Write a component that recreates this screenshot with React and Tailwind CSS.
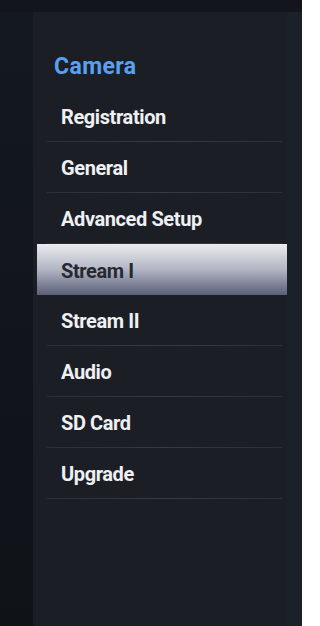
import React from "react";

const items = ["Registration", "General", "Advanced Setup", "Stream I", "Stream II", "Audio", "SD Card", "Upgrade"];

export default function App() {
  return (
    <div className="w-[302px] h-[626px] flex flex-col bg-[#12151b] overflow-hidden" style={{ fontFamily: "Roboto, 'Liberation Sans', sans-serif" }}>
      <div className="h-[12px] shrink-0 bg-[#12151b]" />
      <div className="flex flex-1">
        <div className="w-[33px] shrink-0 bg-gradient-to-b from-[#141820] to-[#0f1217]" />
        <div className="w-[254px] shrink-0 bg-[#1b1e25] flex flex-col">
          <div className="h-[79px] pl-[21px] pt-[41px]">
            <div className="text-[23px] leading-[28px] font-bold text-[#5aa0f0] tracking-[0.4px]">Camera</div>
          </div>
          <div className="flex flex-col pl-[4px]">
            {items.map((it) => {
              const active = it === "Stream I";
              return (
                <div key={it} className={active ? "h-[51px] flex items-center pl-[24px] pt-[2px] bg-gradient-to-b from-[#ebecf0] via-[#b2b5c3] to-[#5b6079]" : "h-[51px] flex flex-col"}>
                  {active ? (
                    <span className="text-[20px] leading-[24px] font-bold text-[#262932] tracking-[-0.4px]">{it}</span>
                  ) : (
                    <>
                      <div className="flex-1 flex items-center pl-[24px] pt-[2px]">
                        <span className="text-[20px] leading-[24px] font-bold text-[#eef0f3] tracking-[-0.4px]">{it}</span>
                      </div>
                      <div className="h-px ml-[10px] mr-[5px] bg-gradient-to-r from-[#2a2e36] via-[#363a42] to-[#2a2e36]" />
                    </>
                  )}
                </div>
              );
            })}
          </div>
        </div>
        <div className="flex-1 bg-[#1c2129]" />
      </div>
    </div>
  );
}
